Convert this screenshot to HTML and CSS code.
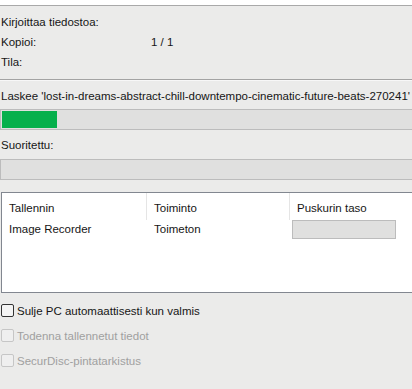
FILE: index.html
```html
<!DOCTYPE html>
<html lang="fi">
<head>
    <meta charset="UTF-8">
    <meta name="viewport" content="width=device-width, initial-scale=1.0">
    <title>Tallennus</title>
    <link rel="stylesheet" href="styles.css">
</head>
<body>
    <div class="w">
        <!-- yläosan loki-ikkunan alareuna -->
        <div class="top"></div>

        <!-- tila -->
        <div class="info">
            <span>Kirjoittaa tiedostoa:</span><span></span>
            <span>Kopioi:</span><span>1 / 1</span>
            <span>Tila:</span><span></span>
        </div>
        <div class="sep"></div>

        <p class="file">Laskee 'lost-in-dreams-abstract-chill-downtempo-cinematic-future-beats-270241'</p>
        <div class="bar"><div class="fill" style="width: 55px"></div></div>

        <p class="label">Suoritettu:</p>
        <div class="bar"></div>

        <!-- tallentimet -->
        <div class="list">
            <div class="head">
                <span>Tallennin</span>
                <span>Toiminto</span>
                <span>Puskurin taso</span>
            </div>
            <div class="row">
                <span>Image Recorder</span>
                <span>Toimeton</span>
                <span class="buf"><i></i></span>
            </div>
        </div>

        <!-- asetukset -->
        <div class="opts">
            <label class="check"><span class="box"></span>Sulje PC automaattisesti kun valmis</label>
            <label class="check off"><span class="box"></span>Todenna tallennetut tiedot</label>
            <label class="check off"><span class="box"></span>SecurDisc-pintatarkistus</label>
        </div>
    </div>
</body>
</html>
```

FILE: styles.css
```css
* {
  margin: 0;
  padding: 0;
  box-sizing: border-box;
}
body {
  background: #ebebea;
  overflow: hidden;
  font: 11.5px "Liberation Sans", Arial, sans-serif;
  color: #161616;
}
.w {
  width: 430px;
}
.top {
  height: 6px;
  background: #fff;
  border-bottom: 1px solid #a9a9a9;
}
.info {
  display: grid;
  grid-template-columns: 150px 1fr;
  padding-top: 6px;
  line-height: 20px;
  padding-left: 1px;
}
.sep {
  margin-top: 7px;
  border-top: 1px solid #a3a3a3;
  border-bottom: 1px solid #f7f7f7;
}
.file,
.label {
  line-height: 20px;
  padding-left: 1px;
  white-space: nowrap;
}
.file {
  margin-top: 5px;
}
.bar {
  height: 21px;
  margin-top: 3px;
  background: #e0e0df;
  border: 1px solid #bcbcbc;
  padding: 1px;
}
.fill {
  height: 100%;
  background: #06b04c;
}
.label {
  margin-top: 5px;
}
.label + .bar {
  margin-top: 4px;
}
.list {
  margin-top: 12px;
  margin-left: 1px;
  height: 101px;
  background: #fff;
  border: 1px solid #828790;
  border-right: none;
}
.head,
.row {
  display: grid;
  grid-template-columns: 145px 143px 1fr;
}
.head span {
  height: 27px;
  padding: 5px 0 0 7px;
  line-height: 20px;
  border-right: 1px solid #e5e5e5;
}
.row span {
  height: 19px;
  line-height: 18px;
  padding-left: 7px;
}
.row .buf {
  padding: 0 0 0 2px;
}
.buf i {
  display: block;
  width: 104px;
  height: 19px;
  background: #e0e0df;
  border: 1px solid #bcbcbc;
}
.opts {
  margin-top: 5px;
}
.check {
  display: flex;
  align-items: center;
  gap: 3px;
  height: 25px;
  padding-left: 1px;
}
.box {
  width: 13px;
  height: 13px;
  border: 1px solid #333;
  border-radius: 2px;
  background: #f4f4f4;
}
.check.off {
  color: #a0a0a0;
}
.check.off .box {
  border-color: #c6c6c6;
  background: #efefef;
}
```
